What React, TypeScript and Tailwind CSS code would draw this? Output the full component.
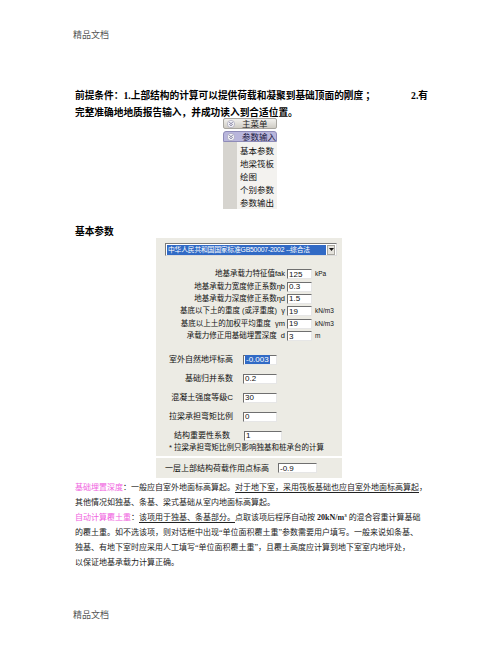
import React from "react";

const serif = "font-['Liberation_Serif','Noto_Sans_CJK_SC',serif]";
const ui = "font-['Liberation_Sans','Noto_Sans_CJK_SC',sans-serif]";

function ChevronBadge() {
  return (
    <svg width="8" height="8" viewBox="0 0 8 8" className="shrink-0">
      <circle cx="4" cy="4" r="3.6" fill="#f4f4f8" stroke="#9a98b0" strokeWidth="0.6" />
      <path d="M2.3 2.3 L4 3.6 L5.7 2.3 M2.3 4.3 L4 5.6 L5.7 4.3" fill="none" stroke="#5a5880" strokeWidth="0.8" />
    </svg>
  );
}

function SideMenu() {
  const items = ["基本参数", "地梁筏板", "绘图", "个别参数", "参数输出"];
  return (
    <div className={`ml-[223px] w-[54px] text-[8.5px] ${ui}`}>
      <div className="h-[11px] flex items-center gap-[3px] pl-[3px] rounded-[2px] border border-[#a8a6a0] bg-gradient-to-b from-[#f2f1ee] to-[#cfccc4] text-[#222]">
        <ChevronBadge />
        <span className="leading-[10px] ml-[4px]">主菜单</span>
      </div>
      <div className="mt-[2px] h-[11px] flex items-center gap-[3px] pl-[3px] rounded-t-[3px] border border-[#8e8bb8] bg-[#b9b6dc] text-[#1a1840]">
        <ChevronBadge />
        <span className="leading-[10px] ml-[4px]">参数输入</span>
      </div>
      <div className="flex h-[67px]">
        <div className="w-[14px] bg-[#d6d4cf]" />
        <div className="flex-1 bg-[#f3f2ef] pt-[3px] pl-[3px] text-[#111]">
          {items.map((t) => (
            <div key={t} className="h-[13px] leading-[13px] whitespace-nowrap">
              {t}
            </div>
          ))}
        </div>
      </div>
    </div>
  );
}

function Field({ value, w, selected }: { value: string; w: number; selected?: boolean }) {
  return (
    <div
      className={`h-[10px] bg-white border-t border-l border-[#6f6f6f] border-b-[#e6e6e6] border-r-[#e6e6e6] border-b border-r flex items-center pl-[1px] text-[8px] leading-[9px] ${
        w === 25 ? "w-[25px]" : w === 34 ? "w-[34px]" : w === 38 ? "w-[38px]" : "w-[39px]"
      }`}
    >
      {selected ? <span className="bg-[#316ac5] text-white px-[1px]">{value}</span> : <span>{value}</span>}
    </div>
  );
}

const bearing = [
  { label: "地基承载力特征值fak", value: "125", unit: "kPa" },
  { label: "地基承载力宽度修正系数ηb", value: "0.3", unit: "" },
  { label: "地基承载力深度修正系数ηd", value: "1.5", unit: "" },
  { label: "基底以下土的重度 (或浮重度)  γ", value: "19", unit: "kN/m3" },
  { label: "基底以上土的加权平均重度  γm", value: "19", unit: "kN/m3" },
  { label: "承载力修正用基础埋置深度  d", value: "3", unit: "m" },
];

const general = [
  { label: "室外自然地坪标高", value: "-0.003", selected: true },
  { label: "基础归并系数", value: "0.2" },
  { label: "混凝土强度等级C", value: "30" },
  { label: "拉梁承担弯矩比例", value: "0" },
];

function ParamDialog() {
  return (
    <div className={`ml-[156px] w-[186px] ${ui} text-[#111]`}>
      <div className="h-[218px] bg-[#ecebe4] pt-[5px] overflow-hidden">
        {/* code selector */}
        <div className="ml-[9px] w-[172px] h-[13px] bg-white border-t border-l border-[#7a7a7a] border-b border-r border-b-[#dcdcdc] border-r-[#dcdcdc] flex items-center pl-[1px] pr-[1px]">
          <div className="flex-1 h-[10px] bg-[#316ac5] text-white text-[6.8px] tracking-[-0.2px] leading-[10px] whitespace-nowrap pl-[1px]">
            中华人民共和国国家标准GB50007-2002 --综合法
          </div>
          <div className="ml-[1px] w-[8px] h-[10px] bg-[#e4e2dc] border border-[#a9a7a0] flex items-center justify-center">
            <svg width="5" height="3" viewBox="0 0 5 3">
              <path d="M0 0 H5 L2.5 3 Z" fill="#111" />
            </svg>
          </div>
        </div>

        <div className="mt-[12px] text-[7.5px]">
          {bearing.map((r) => (
            <div key={r.label} className="h-[12.4px] flex items-center">
              <div className="w-[129px] text-right whitespace-pre leading-[10px]">{r.label}</div>
              <div className="ml-[2px]">
                <Field value={r.value} w={25} />
              </div>
              <div className="ml-[3px] text-[6.5px] leading-[10px]">{r.unit}</div>
            </div>
          ))}
        </div>

        <div className="mt-[8px] text-[8px]">
          {general.map((r) => (
            <div key={r.label} className="h-[19px] flex items-center">
              <div className="w-[77px] text-right whitespace-nowrap leading-[11px]">{r.label}</div>
              <div className="ml-[10px]">
                <Field value={r.value} w={34} selected={r.selected} />
              </div>
            </div>
          ))}
          <div className="h-[19px] flex items-center">
            <div className="w-[74px] text-right whitespace-nowrap leading-[11px]">结构重要性系数</div>
            <div className="ml-[14px]">
              <Field value="1" w={38} />
            </div>
          </div>
          <div className="mt-[-2px] ml-[13px] h-[9px] leading-[9px] text-[7.5px] whitespace-nowrap">
            * 拉梁承担弯矩比例只影响独基和桩承台的计算
          </div>
        </div>
      </div>
      <div className="h-[2px] bg-white" />
      <div className="h-[20px] bg-[#ecebe4] flex items-center pl-[9px] text-[8px]">
        <div className="w-[104px] whitespace-nowrap leading-[11px]">一层上部结构荷载作用点标高</div>
        <div className="ml-[9px]">
          <Field value="-0.9" w={39} />
        </div>
      </div>
    </div>
  );
}

function BodyText() {
  const pink = "text-[#f062e0]";
  const line = "h-[15px] leading-[15px] whitespace-nowrap";
  return (
    <div className={`mt-[1.5px] pl-[75px] text-[8px] text-[#222] ${serif}`}>
      <div className={line}>
        <span className={pink}>基础埋置深度</span>：一般应自室外地面标高算起。
        <span className="underline underline-offset-[2px]">对于地下室，采用筏板基础也应自室外地面标高算起</span>，
      </div>
      <div className={line}>其他情况如独基、条基、梁式基础从室内地面标高算起。</div>
      <div className={line}>
        <span className={pink}>自动计算覆土重</span>：
        <span className="underline underline-offset-[2px]">该项用于独基、条基部分。</span>点取该项后程序自动按{" "}
        <span className="font-bold">
          20kN/m<sup className="text-[5px]">3</sup>
        </span>{" "}
        的混合容重计算基础
      </div>
      <div className={line}>的覆土重。如不选该项，则对话框中出现“单位面积覆土重”参数需要用户填写。一般来说如条基、</div>
      <div className={line}>独基、有地下室时应采用人工填写“单位面积覆土重”，且覆土高度应计算到地下室室内地坪处，</div>
      <div className={line}>以保证地基承载力计算正确。</div>
    </div>
  );
}

export default function App() {
  return (
    <div className={`w-[502px] h-[649px] bg-white overflow-hidden text-black ${serif}`}>
      <div className="pl-[73px] pt-[29px] h-[41px] text-[9px] leading-[12px] text-[#555]">精品文档</div>

      <div className="mt-[47px] ml-[75px] w-[353px] text-[9.7px] font-bold">
        <div className="h-[16px] leading-[16px] flex justify-between whitespace-nowrap">
          <span>前提条件：1.上部结构的计算可以提供荷载和凝聚到基础顶面的刚度 ；</span>
          <span>2.有</span>
        </div>
        <div className="h-[14px] leading-[18px] whitespace-nowrap">完整准确地地质报告输入，并成功读入到合适位置。</div>
      </div>

      <SideMenu />

      <div className="mt-[17px] pl-[75px] h-[12px] leading-[12px] text-[9.7px] font-bold">基本参数</div>

      <ParamDialog />

      <BodyText />

      <div className="mt-[39.5px] pl-[73px] h-[12px] text-[9px] leading-[12px] text-[#555]">精品文档</div>
    </div>
  );
}
